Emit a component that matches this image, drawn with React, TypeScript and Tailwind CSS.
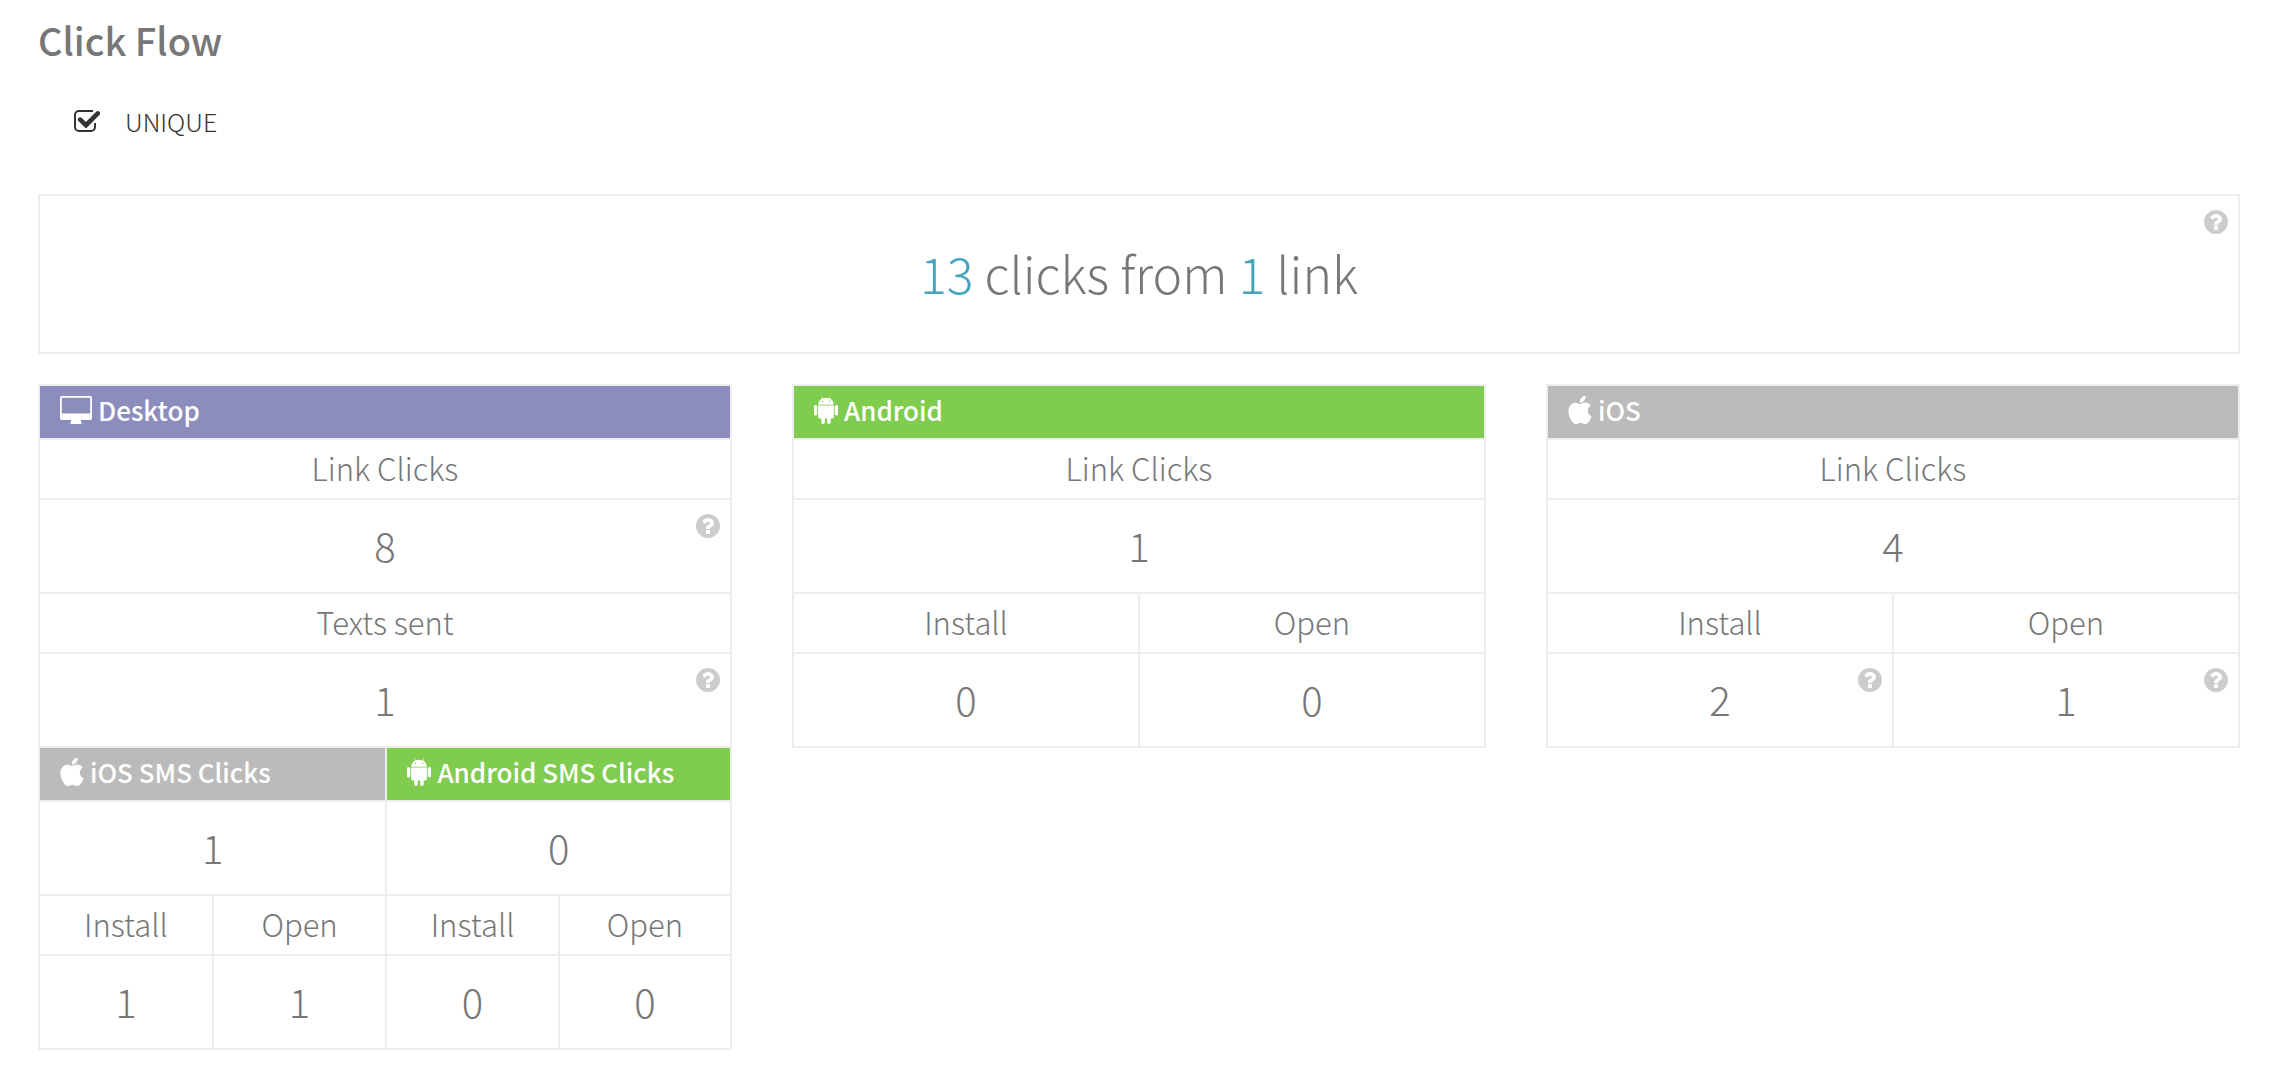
import type { ReactNode } from "react";
import { BsAndroid2, BsApple } from "react-icons/bs";

const TONES = {
  purple: "bg-[#8c8dbc]",
  green: "bg-[#7fcc4f]",
  gray: "bg-[#bbbbbb]",
};

function DesktopIcon() {
  return (
    <svg viewBox="0 0 32 28" className="h-7 w-8" fill="currentColor" aria-hidden="true">
      <path
        fillRule="evenodd"
        d="M2 0h28a2 2 0 0 1 2 2v20a2 2 0 0 1-2 2h-9v1.500q0 1.200 .6 1.700V28H10.400v-.8q.6-.5 .6-1.700V24H2a2 2 0 0 1-2-2V2a2 2 0 0 1 2-2zM2.400 1.800a.6.6 0 0 0-.6.6V17.500H30.200V2.400a.6.6 0 0 0-.6-.6z"
      />
    </svg>
  );
}

function AndroidIcon() {
  return <BsAndroid2 className="h-7 w-6" preserveAspectRatio="xMidYMid slice" aria-hidden="true" />;
}

function AppleIcon() {
  return <BsApple className="h-7 w-6" preserveAspectRatio="xMidYMid slice" aria-hidden="true" />;
}

function Help() {
  return (
    <button type="button" aria-label="Help" className="absolute top-[14px] right-[10px] text-[#cccccc]">
      <svg viewBox="128 128 1536 1536" className="size-6" fill="currentColor" aria-hidden="true">
        <path d="M1024 1376v-192q0-14-9-23t-23-9h-192q-14 0-23 9t-9 23v192q0 14 9 23t23 9h192q14 0 23-9t9-23zm256-672q0-88-55.500-163t-138.500-116-170-41q-243 0-371 213-15 24 8 42l132 100q7 6 19 6 16 0 25-12 53-68 86-92 34-24 86-24 48 0 85.500 26t37.500 59q0 38-20 61t-68 45q-63 28-115.500 86.500t-52.500 125.500v36q0 14 9 23t23 9h192q14 0 23-9t9-23q0-19 21.500-49.500t54.500-49.500q32-18 49-28.500t46-35 44.500-48 28-60.500 12.500-81zm384 192q0 209-103 385.500t-279.500 279.500-385.500 103-385.500-103-279.500-279.500-103-385.500 103-385.500 279.500-279.500 385.500-103 385.500 103 279.500 279.500 103 385.500z" />
      </svg>
    </button>
  );
}

type CellProps = { span?: number; children: ReactNode };

function Head({ tone, icon, span, children }: CellProps & { tone: keyof typeof TONES; icon: ReactNode }) {
  return (
    <th colSpan={span} className={`h-[54px] border-2 border-[#eeeeee] px-5 pb-1 text-left text-[26px] leading-none font-medium text-white ${TONES[tone]}`}>
      <span className="flex items-center gap-1.5">
        {icon}
        {children}
      </span>
    </th>
  );
}

function Label({ span, children }: CellProps) {
  return (
    <th colSpan={span} className="h-[60px] border-2 border-[#eeeeee] pb-1 text-center text-[31px] leading-none font-light">
      {children}
    </th>
  );
}

function Value({ span, help, children }: CellProps & { help?: boolean }) {
  return (
    <td colSpan={span} className="relative h-[94px] border-2 border-[#eeeeee] pb-0.5 text-center text-[40px] leading-none font-light">
      {children}
      {help && <Help />}
    </td>
  );
}

function Card({ columns, children }: { columns?: ReactNode; children: ReactNode }) {
  return (
    <table className="w-full table-fixed border-collapse">
      {columns}
      <tbody>{children}</tbody>
    </table>
  );
}

export default function App() {
  return (
    <main className="min-h-screen bg-white pt-4 pr-[52px] pb-9 pl-[38px] font-['Noto_Sans_CJK_JP','Noto_Sans_CJK_SC',sans-serif] text-[#777777]">
      <h1 className="text-[38px] leading-[48px] font-medium">Click Flow</h1>

      <label className="mt-7 ml-9 flex h-[58px] w-fit cursor-pointer items-center gap-[25px] text-[25px] leading-none font-light text-[#333333]">
        <input type="checkbox" defaultChecked className="peer sr-only" />
        <svg viewBox="0 0 26 22" className="h-[22px] w-[26px]" aria-hidden="true">
          <path d="M19 1H5a4 4 0 0 0-4 4v12a4 4 0 0 0 4 4h12a4 4 0 0 0 4-4v-4" fill="none" stroke="currentColor" strokeWidth="2" />
          <path d="M6.200 9.700 12 15.200 23.800 3.400" fill="none" stroke="currentColor" strokeWidth="4.600" strokeLinejoin="miter" strokeLinecap="round" />
        </svg>
        UNIQUE
      </label>

      <section className="relative mt-11 flex h-40 items-center justify-center border-2 border-[#eeeeee] pb-1">
        <p className="text-[50px] leading-none font-light">
          <span className="text-[#45a5bf]">13</span> clicks from <span className="text-[#45a5bf]">1</span> link
        </p>
        <Help />
      </section>

      <div className="mt-[30px] grid grid-cols-3 items-start gap-[60px]">
        <Card
          columns={
            <colgroup>
              <col className="w-[25.1%]" />
              <col className="w-[25.1%]" />
              <col />
              <col />
            </colgroup>
          }
        >
          <tr><Head span={4} tone="purple" icon={<DesktopIcon />}>Desktop</Head></tr>
          <tr><Label span={4}>Link Clicks</Label></tr>
          <tr><Value span={4} help>8</Value></tr>
          <tr><Label span={4}>Texts sent</Label></tr>
          <tr><Value span={4} help>1</Value></tr>
          <tr>
            <Head span={2} tone="gray" icon={<AppleIcon />}>iOS SMS Clicks</Head>
            <Head span={2} tone="green" icon={<AndroidIcon />}>Android SMS Clicks</Head>
          </tr>
          <tr><Value span={2}>1</Value><Value span={2}>0</Value></tr>
          <tr><Label>Install</Label><Label>Open</Label><Label>Install</Label><Label>Open</Label></tr>
          <tr><Value>1</Value><Value>1</Value><Value>0</Value><Value>0</Value></tr>
        </Card>

        <Card>
          <tr><Head span={2} tone="green" icon={<AndroidIcon />}>Android</Head></tr>
          <tr><Label span={2}>Link Clicks</Label></tr>
          <tr><Value span={2}>1</Value></tr>
          <tr><Label>Install</Label><Label>Open</Label></tr>
          <tr><Value>0</Value><Value>0</Value></tr>
        </Card>

        <Card>
          <tr><Head span={2} tone="gray" icon={<AppleIcon />}>iOS</Head></tr>
          <tr><Label span={2}>Link Clicks</Label></tr>
          <tr><Value span={2}>4</Value></tr>
          <tr><Label>Install</Label><Label>Open</Label></tr>
          <tr><Value help>2</Value><Value help>1</Value></tr>
        </Card>
      </div>
    </main>
  );
}
